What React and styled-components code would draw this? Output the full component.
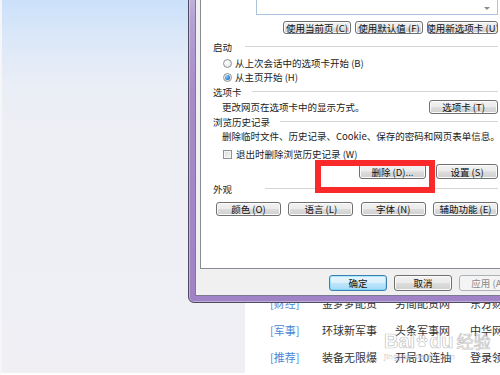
import React from 'react';
import styled, { createGlobalStyle, css } from 'styled-components';

const GlobalStyle = createGlobalStyle`
  html, body {
    margin: 0;
    padding: 0;
    background: #ffffff;
  }
  * {
    box-sizing: border-box;
  }
`;

const Screen = styled.div`
  position: relative;
  width: 500px;
  height: 375px;
  overflow: hidden;
  font-family: "Noto Sans CJK SC", "Liberation Sans", sans-serif;
`;

const Backdrop = styled.div`
  display: flex;
  height: 100%;
`;

const SidePane = styled.div`
  flex: none;
  width: 245px;
  height: 100%;
  border-left: 2px solid #f6f6f9;
  border-bottom: 2px solid #ffffff;
  background: linear-gradient(
    180deg,
    #cbe1fa 0px,
    #dce8f8 40px,
    #eaeef6 85px,
    #eeeff5 130px,
    #efeff4 100%
  );
`;

const WebColumn = styled.div`
  flex: 1;
  min-width: 0;
  background: #ffffff;
  padding-top: 290px;
`;

const LinkRow = styled.div`
  display: grid;
  grid-template-columns: 52px 73px 75px auto;
  padding-left: 25px;
  height: 27px;
  line-height: 27px;
  font-size: 11px;
  color: #333333;
  white-space: nowrap;
`;

const Tag = styled.span`
  color: #4a86d6;
`;

/* ---------- dialog window ---------- */

const Dialog = styled.div`
  position: absolute;
  left: 188px;
  top: -24px;
  width: 340px;
  padding: 6px;
  border: 1px solid #4e4b5e;
  border-radius: 0 0 6px 6px;
  background: linear-gradient(180deg, #c9c4e2 0px, #b6a2d6 40px, #a68ac9 120px, #a083c6 100%);
  box-shadow: inset 0 0 0 1px rgba(255, 255, 255, 0.35);
`;

const Body = styled.div`
  border: 1px solid #7d7990;
  background: #f0f0f0;
  padding: 4px 3px 4px 4px;
  color: #1a1a1a;
  font-size: 9.5px;
`;

const Page = styled.div`
  height: 281px;
  border: 1px solid #898c95;
  background: #ffffff;
  padding: 0 18px 0 12px;
  display: flex;
  flex-direction: column;
`;

const HomeBox = styled.div`
  height: 26px;
  margin-left: 43px;
  border: 1px solid #abc3dd;
  border-top: none;
  display: flex;
  justify-content: flex-end;
  align-items: flex-end;
  padding: 0 7px 4px 0;
`;

const ScrollArrow = styled.div`
  width: 0;
  height: 0;
  border-left: 3px solid transparent;
  border-right: 3px solid transparent;
  border-top: 3px solid #8c8c8c;
`;

const Row = styled.div`
  display: flex;
  align-items: center;
  height: ${p => p.$h || 14}px;
  margin-top: ${p => p.$mt || 0}px;
  padding-left: ${p => p.$indent || 0}px;
  justify-content: ${p => p.$justify || 'flex-start'};
  gap: ${p => p.$gap || 0}px;
  white-space: nowrap;
`;

const Label = styled.span`
  width: ${p => p.$w}px;
  flex: none;
`;

const Rule = styled.div`
  flex: 1;
  height: 2px;
  border-top: 1px solid #d5d5d5;
  border-bottom: 1px solid #ffffff;
`;

const Text = styled.span`
  flex: 1;
`;

const Radio = styled.span`
  width: 9px;
  height: 9px;
  border-radius: 50%;
  border: 1px solid #8f9296;
  background: radial-gradient(circle at 40% 35%, #ffffff 0%, #e8e8e8 70%, #d6d6d6 100%);
  margin-right: 3px;
  display: flex;
  align-items: center;
  justify-content: center;
  flex: none;

  &::after {
    content: '';
    width: 5px;
    height: 5px;
    border-radius: 50%;
    background: ${p => (p.$checked ? 'radial-gradient(circle at 35% 35%, #8fd0ff 0%, #2d7fd0 60%, #1c4f96 100%)' : 'transparent')};
  }
`;

const Check = styled.span`
  width: 9px;
  height: 9px;
  border: 1px solid #8f9296;
  background: linear-gradient(135deg, #dcdcdc 0%, #f6f6f6 100%);
  box-shadow: inset 0 0 0 1px #f4f4f4;
  margin-right: 4px;
  flex: none;
`;

const Button = styled.div`
  width: ${p => p.$w}px;
  height: ${p => p.$h || 14}px;
  flex: none;
  display: flex;
  align-items: center;
  justify-content: center;
  overflow: hidden;
  white-space: nowrap;
  border: 1px solid #707070;
  border-radius: 3px;
  background: linear-gradient(180deg, #f2f2f2 0%, #ebebeb 48%, #dddddd 52%, #cfcfcf 100%);
  box-shadow: inset 0 0 0 1px #fbfbfb;
  color: #111111;
  font-size: 9.5px;

  ${p =>
    p.$primary &&
    css`
      border-color: #3c7fb1;
      background: linear-gradient(180deg, #eaf6fd 0%, #d9f0fc 48%, #bee6fd 52%, #a7d9f5 100%);
      box-shadow: inset 0 0 0 1px #48d2fb66;
    `}

  ${p =>
    p.$disabled &&
    css`
      border-color: #adb2b5;
      background: #f4f4f4;
      box-shadow: none;
      color: #8a8a8a;
    `}
`;

const Footer = styled.div`
  display: flex;
  justify-content: flex-end;
  gap: 7px;
  margin-top: 6px;
`;

/* ---------- overlays ---------- */

const Highlight = styled.div`
  position: absolute;
  left: 315px;
  top: 160px;
  width: 120px;
  height: 33px;
  border: 6px solid #fb2a2a;
`;

const Watermark = styled.div`
  position: absolute;
  left: 384px;
  top: 330px;
  display: flex;
  flex-direction: column;
  color: rgba(255, 255, 255, 0.55);
  -webkit-text-stroke: 0.7px rgba(140, 140, 140, 0.55);
  pointer-events: none;
`;

const MarkLine = styled.div`
  display: flex;
  align-items: center;
  font-family: "Liberation Sans", sans-serif;
  font-weight: 700;
  font-size: 20px;
  line-height: 22px;
`;

const MarkCn = styled.span`
  font-family: "Noto Sans CJK SC", sans-serif;
  font-weight: 400;
  font-size: 17px;
  margin-left: 3px;
`;

const MarkSub = styled.div`
  font-family: "Liberation Sans", sans-serif;
  font-size: 8px;
  line-height: 9px;
  letter-spacing: 0.4px;
  -webkit-text-stroke: 0.3px rgba(140, 140, 140, 0.5);
`;

const Paw = () => (
  <svg width="12" height="14" viewBox="0 0 12 14" style={{ margin: '0 1px' }}>
    <g fill="rgba(255,255,255,0.5)" stroke="rgba(140,140,140,0.55)" strokeWidth="0.7">
      <ellipse cx="2.2" cy="6" rx="1.4" ry="1.8" />
      <ellipse cx="4.5" cy="3" rx="1.4" ry="1.9" />
      <ellipse cx="7.6" cy="3" rx="1.4" ry="1.9" />
      <ellipse cx="9.9" cy="6" rx="1.4" ry="1.8" />
      <path d="M6 7.5 C8.5 7.5 10 10.5 9 12 C8 13.2 6.8 12.4 6 12.4 C5.2 12.4 4 13.2 3 12 C2 10.5 3.5 7.5 6 7.5 Z" />
    </g>
  </svg>
);

const Header = ({ label, width, mt }) => (
  <Row $mt={mt}>
    <Label $w={width}>{label}</Label>
    <Rule />
  </Row>
);

const links = [
  ['[财经]', '金梦梦配货', '劳简配货网', '东方财富'],
  ['[军事]', '环球新军事', '头条军事网', '中华网军事'],
  ['[推荐]', '装备无限爆', '开局10连抽', '登录领取'],
];

export default function App() {
  return (
    <>
      <GlobalStyle />
      <Screen>
        <Backdrop>
          <SidePane />
          <WebColumn>
            {links.map(([tag, ...items]) => (
              <LinkRow key={tag}>
                <Tag>{tag}</Tag>
                {items.map(item => (
                  <span key={item}>{item}</span>
                ))}
              </LinkRow>
            ))}
          </WebColumn>
        </Backdrop>

        <Dialog>
          <Body>
            <Page>
              <HomeBox>
                <ScrollArrow />
              </HomeBox>

              <Row $mt={6} $h={13} $justify="flex-end" $gap={4}>
                <Button $w={68} $h={13}>使用当前页 (C)</Button>
                <Button $w={68} $h={13}>使用默认值 (F)</Button>
                <Button $w={71} $h={13}>使用新选项卡 (U)</Button>
              </Row>

              <Header label="启动" width={32} mt={6} />
              <Row $mt={2} $indent={10}>
                <Radio />
                <Text>从上次会话中的选项卡开始 (B)</Text>
              </Row>
              <Row $indent={10}>
                <Radio $checked />
                <Text>从主页开始 (H)</Text>
              </Row>

              <Header label="选项卡" width={39} mt={1} />
              <Row $mt={1} $indent={9}>
                <Text>更改网页在选项卡中的显示方式。</Text>
                <Button $w={69}>选项卡 (T)</Button>
              </Row>

              <Header label="浏览历史记录" width={67} mt={1} />
              <Row $indent={9}>
                <Text>删除临时文件、历史记录、Cookie、保存的密码和网页表单信息。</Text>
              </Row>
              <Row $mt={4} $indent={10}>
                <Check />
                <Text>退出时删除浏览历史记录 (W)</Text>
              </Row>
              <Row $mt={3} $h={15} $justify="flex-end" $gap={10}>
                <Button $w={67} $h={15}>删除 (D)...</Button>
                <Button $w={62} $h={15}>设置 (S)</Button>
              </Row>

              <Header label="外观" width={52} mt={3} />
              <Row $mt={6} $indent={3} $justify="space-between">
                <Button $w={65}>颜色 (O)</Button>
                <Button $w={65}>语言 (L)</Button>
                <Button $w={65}>字体 (N)</Button>
                <Button $w={65}>辅助功能 (E)</Button>
              </Row>
            </Page>

            <Footer>
              <Button $w={58} $h={16} $primary>确定</Button>
              <Button $w={58} $h={16}>取消</Button>
              <Button $w={58} $h={16} $disabled>应用 (A)</Button>
            </Footer>
          </Body>
        </Dialog>

        <Highlight />

        <Watermark>
          <MarkLine>
            Bai
            <Paw />
            du
            <MarkCn>经验</MarkCn>
          </MarkLine>
          <MarkSub>jingyan.baidu.com</MarkSub>
        </Watermark>
      </Screen>
    </>
  );
}
